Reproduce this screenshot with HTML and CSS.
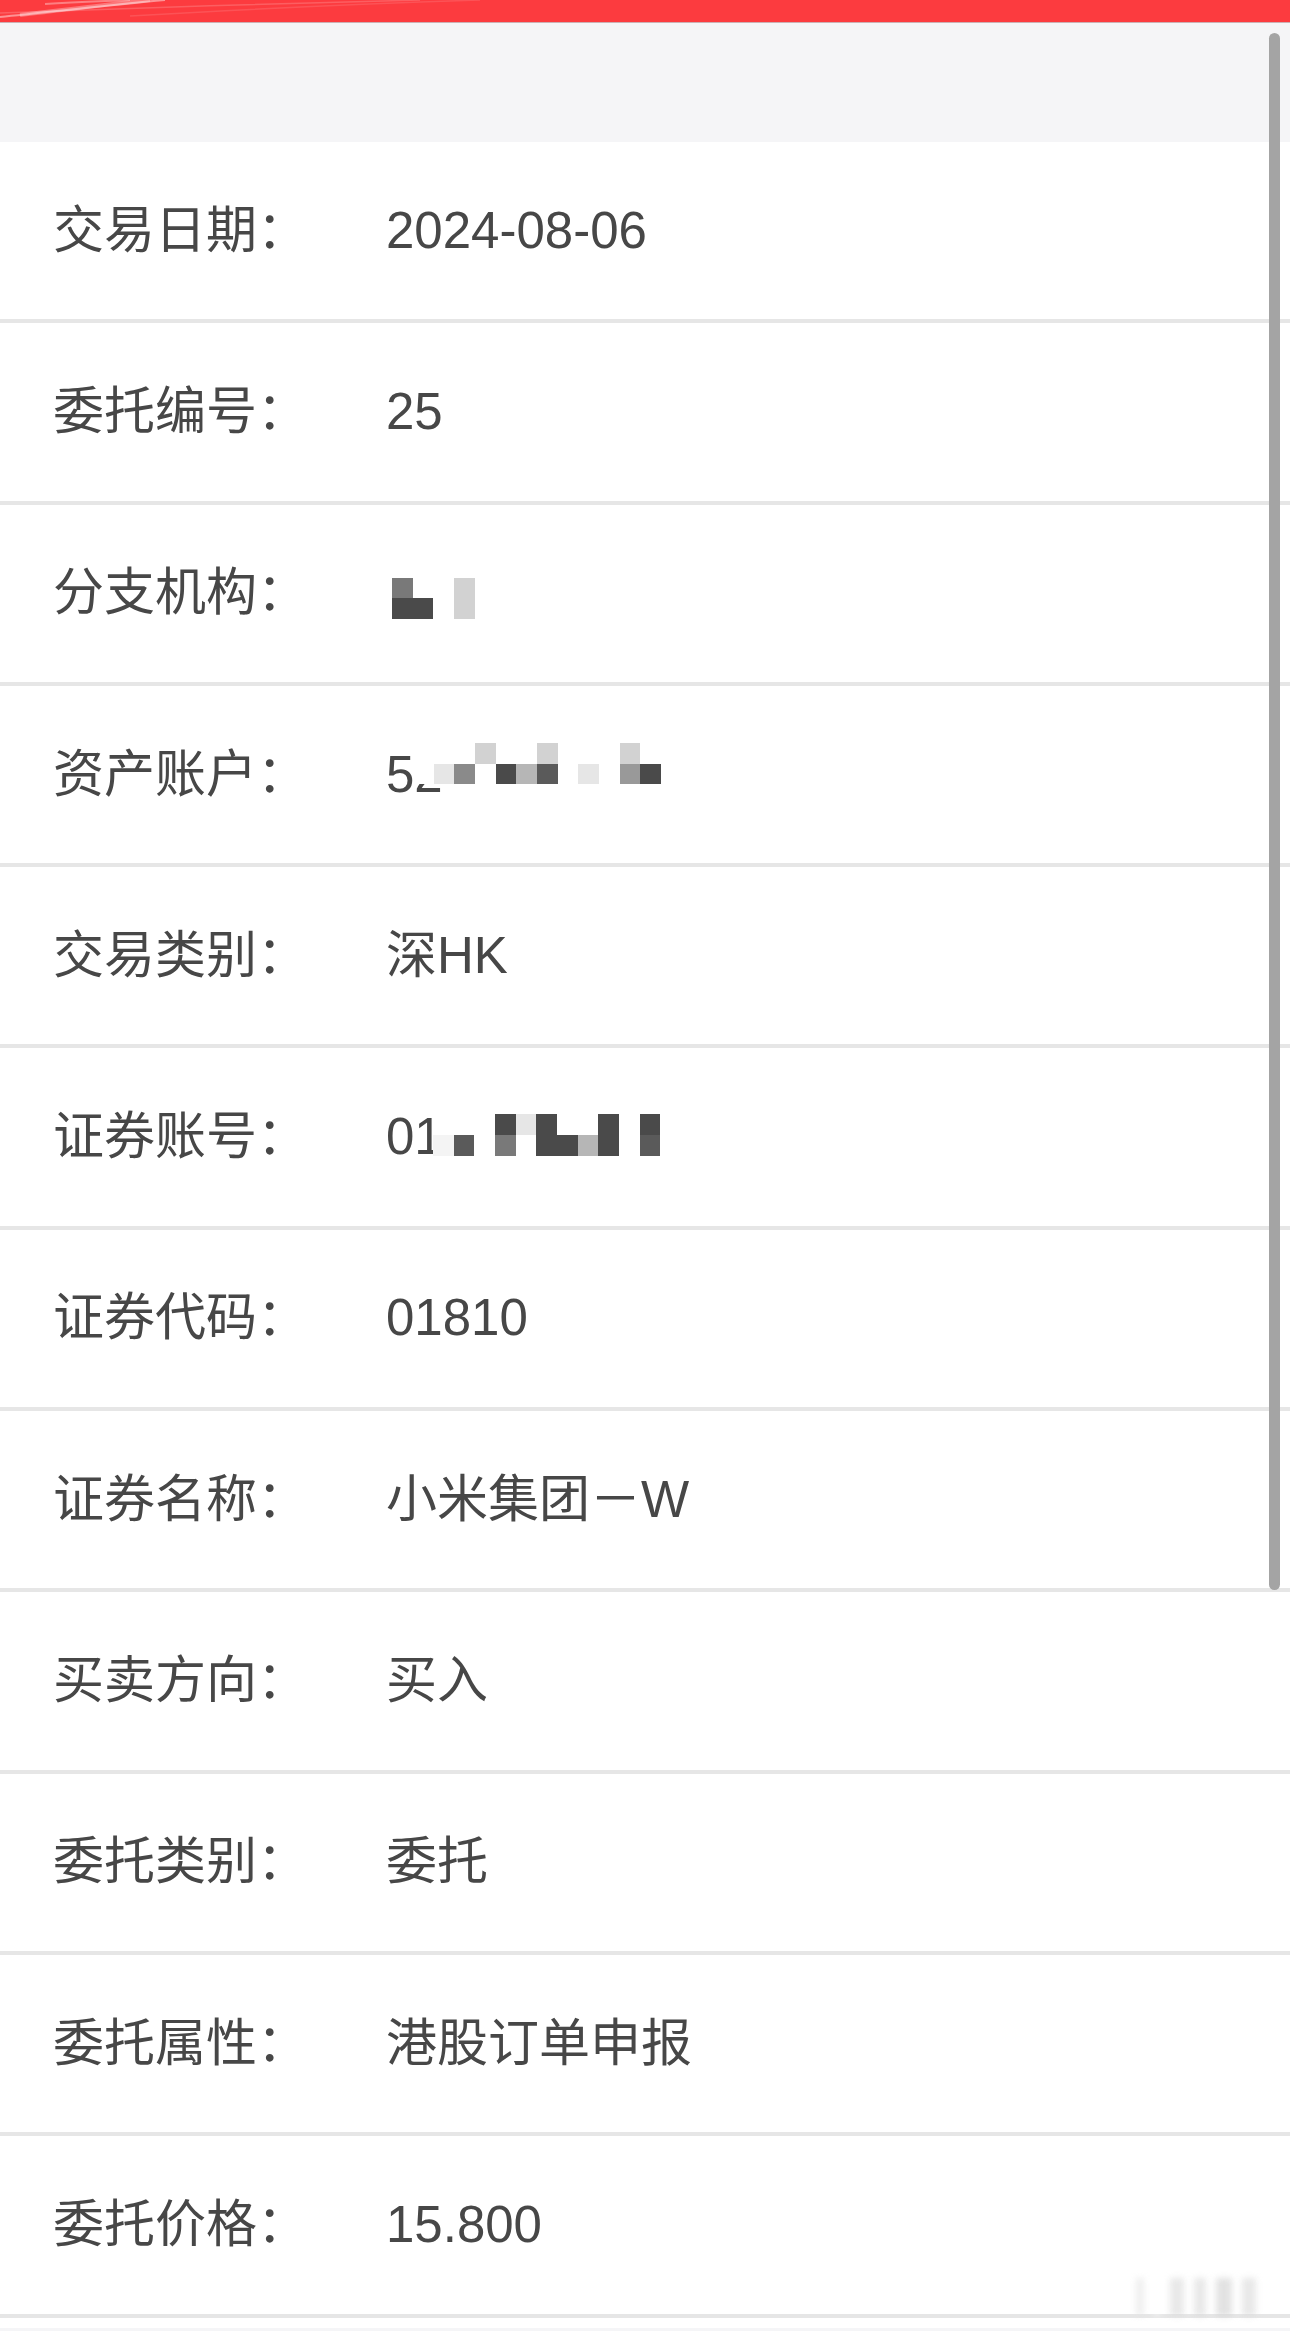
FILE: index.html
```html
<!DOCTYPE html>
<html lang="zh-CN">
<head>
<meta charset="utf-8">
<title>委托详情</title>
<link rel="stylesheet" href="styles.css">
</head>
<body>
<header class="topbar">
  <svg class="swoosh" width="1290" height="22" viewBox="0 0 1290 22" preserveAspectRatio="none">
    <path d="M0 17 C50 12 110 5 165 0" fill="none" stroke="rgba(255,255,255,0.45)" stroke-width="2.2"/>
    <path d="M20 15 C70 9 120 3 150 0" fill="none" stroke="rgba(255,255,255,0.3)" stroke-width="4"/>
    <path d="M45 4 C80 2 110 1 130 0" fill="none" stroke="rgba(255,255,255,0.35)" stroke-width="2"/>
    <path d="M0 13 C120 8 300 3 420 0" fill="none" stroke="rgba(255,255,255,0.18)" stroke-width="1.5"/>
    <path d="M130 16 C250 9 350 4 480 0" fill="none" stroke="rgba(255,255,255,0.12)" stroke-width="1.5"/>
  </svg>
</header>
<div class="subbar"></div>
<main class="list">
  <div class="row"><span class="label">交易日期：</span><span class="value">2024-08-06</span></div>
  <div class="row"><span class="label">委托编号：</span><span class="value">25</span></div>
  <div class="row"><span class="label">分支机构：</span><span class="value">
    <span class="mosaic solo cols4">
      <i class="g7"></i><i></i><i></i><i class="gd"></i>
      <i class="g4"></i><i class="g4"></i><i></i><i class="gd"></i>
    </span></span></div>
  <div class="row"><span class="label">资产账户：</span><span class="value redact">52<span class="mosaic over acct cols12">
      <i class="gw"></i><i class="gw"></i><i class="gw"></i><i class="gd"></i><i class="gw"></i><i class="gw"></i><i class="gd"></i><i class="gw"></i><i class="gw"></i><i class="gw"></i><i class="gd"></i><i></i>
      <i class="gw"></i><i class="ge"></i><i class="g8"></i><i></i><i class="g4"></i><i class="gb"></i><i class="g5"></i><i></i><i class="ge"></i><i></i><i class="g9"></i><i class="g4"></i>
    </span></span></div>
  <div class="row"><span class="label">交易类别：</span><span class="value">深HK</span></div>
  <div class="row"><span class="label">证券账号：</span><span class="value redact">01<span class="mosaic over sec cols11">
      <i></i><i></i><i></i><i class="g4"></i><i class="ge"></i><i class="g4"></i><i></i><i></i><i class="g4"></i><i></i><i class="g4"></i>
      <i class="gf"></i><i class="g5"></i><i></i><i class="g7"></i><i></i><i class="g4"></i><i class="g4"></i><i class="gb"></i><i class="g4"></i><i></i><i class="g5"></i>
    </span></span></div>
  <div class="row"><span class="label">证券代码：</span><span class="value">01810</span></div>
  <div class="row"><span class="label">证券名称：</span><span class="value">小米集团－W</span></div>
  <div class="row"><span class="label">买卖方向：</span><span class="value">买入</span></div>
  <div class="row"><span class="label">委托类别：</span><span class="value">委托</span></div>
  <div class="row"><span class="label">委托属性：</span><span class="value">港股订单申报</span></div>
  <div class="row last"><span class="label">委托价格：</span><span class="value">15.800</span>
    <span class="watermark"><b class="w1"></b><b class="w2"></b><b class="w3"></b><b class="w4"></b><b class="w5"></b><b class="w6"></b></span>
  </div>
</main>
<div class="tail"></div>
<div class="scrollbar"></div>
</body>
</html>
```
FILE: styles.css
```css
* { box-sizing: border-box; }
html, body { margin: 0; padding: 0; }
body {
  background: #f5f5f7;
  font-family: "Liberation Sans", "Noto Sans CJK SC", "Noto Sans", sans-serif;
  color: #474747;
  position: relative;
  min-height: 2331px;
}
.topbar {
  height: 22px;
  background: #fc3b3f;
  box-shadow: 0 1px 0 rgba(130, 50, 55, 0.35);
  position: relative;
  overflow: hidden;
}
.swoosh { display: block; }
.subbar {
  height: 120px;
  background: #f5f5f7;
}
.list { background: #fff; }
.row {
  height: 181.3px;
  border-bottom: 4px solid #e6e6e6;
  display: flex;
  align-items: center;
  padding-left: 53px;
  font-size: 51px;
  line-height: 60px;
  position: relative;
}
.label {
  flex: none;
  width: 333px;
}
.value {
  display: inline-flex;
  align-items: center;
  white-space: nowrap;
}
.redact { position: relative; }

.mosaic {
  display: inline-grid;
  grid-auto-rows: 20.67px;
}
.mosaic i { display: block; }
.cols4 { grid-template-columns: repeat(4, 20.67px); }
.cols11 { grid-template-columns: repeat(11, 20.67px); }
.cols12 { grid-template-columns: repeat(12, 20.67px); }
.solo { margin-left: 6px; margin-top: 10px; }
.over { position: absolute; }
.acct { left: 27px; top: calc(50% - 31.7px); }
.sec { left: 47px; top: calc(50% - 22.7px); }

.gw { background: #ffffff; }
.g4 { background: #4a4a4a; }
.g5 { background: #5a5a5a; }
.g7 { background: #797979; }
.g8 { background: #8a8a8a; }
.g9 { background: #999999; }
.gb { background: #b6b6b6; }
.gd { background: #d2d2d2; }
.ge { background: #e6e6e6; }
.gf { background: #f4f4f4; }

.tail {
  height: 10px;
  background: #fff;
}
.scrollbar {
  position: absolute;
  left: 1269px;
  top: 33px;
  width: 11px;
  height: 1557px;
  border-radius: 6px;
  background: #a4a4a4;
}
.watermark {
  position: absolute;
  left: 1130px;
  bottom: -2px;
  width: 150px;
  height: 38px;
  display: flex;
  gap: 10px;
  padding: 0 6px;
  filter: blur(3px);
  opacity: 0.6;
}
.watermark b { display: block; height: 100%; background: #d9d9d9; }
.watermark .w1 { width: 8px; background: #e4e4e4; }
.watermark .w2 { width: 6px; background: #fff; }
.watermark .w3 { width: 14px; }
.watermark .w4 { width: 12px; }
.watermark .w5 { width: 16px; background: #cfcfcf; }
.watermark .w6 { width: 14px; }
```
